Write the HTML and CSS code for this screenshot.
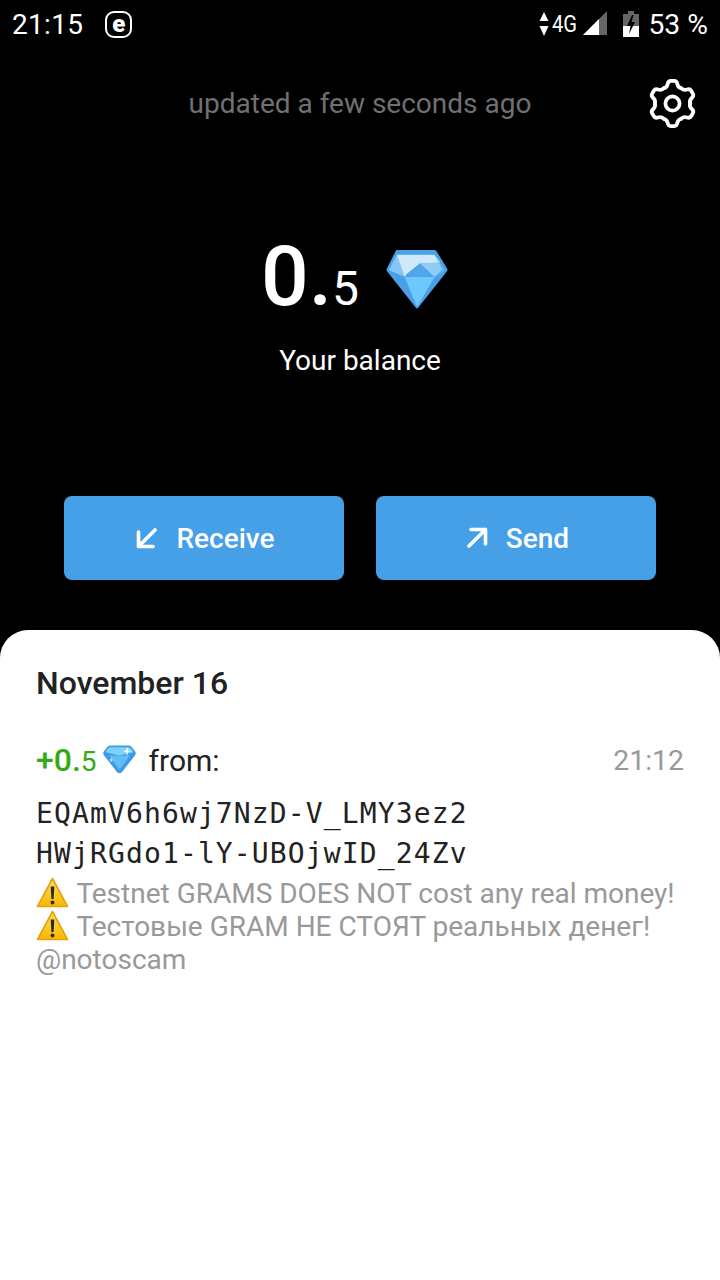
FILE: index.html
```html
<!DOCTYPE html>
<html lang="en">

<head>
  <meta charset="UTF-8">
  <meta name="viewport" content="width=device-width, initial-scale=1.0">
  <title>Wallet</title>
  <link rel="stylesheet" href="styles.css">
</head>

<body>
  <svg class="defs" width="0" height="0">
    <defs>
      <linearGradient id="warn-fill" x1="0" y1="0" x2="0" y2="1">
        <stop offset="0" stop-color="#ffe15a" />
        <stop offset="1" stop-color="#f8b700" />
      </linearGradient>
      <g id="gem">
        <path d="M11 1H50Q51 1 52 2L63 20Q64 22 63 23L33 61Q32 62 31 61L1 23Q0 22 1 20L10 2Q10 1 11 1Z" fill="#4a9fe8" />
        <path d="M11 6 3 22 19.5 29 32 60Z" fill="#86c6f5" />
        <path d="M50 6 61 22 50 29 32 60Z" fill="#62b4f2" />
        <path d="M11 6H50L56 14 35 15 21 26 19.5 29Z" fill="#cfe8fa" />
        <path d="M50 6 56 14 35 15 50 29 58 21Z" fill="#8fcdf7" />
        <path d="M19.5 29 35 15 50 29Z" fill="#4fa6ea" />
        <path d="M19.5 29H50L32 60Z" fill="#6cc8fd" />
      </g>
      <g id="gem-round">
        <path d="M14 3H50Q54 3 57 7L62 14Q65 18 62 22L37 54Q32 59 27 54L2 22Q-1 18 2 14L7 7Q10 3 14 3Z" fill="#3f9be6" />
        <path d="M14 6H50Q53 6 55 9L59 16 32 22 5 16 9 9Q11 6 14 6Z" fill="#7fd0fa" />
        <path d="M12 22H52L32 50Z" fill="#63bdf5" />
        <path d="M47 6 49 12 55 14 49 16 47 22 45 16 39 14 45 12Z" fill="#fff" />
        <path d="M16 26 17 30 21 31 17 32 16 36 15 32 11 31 15 30Z" fill="#eaf7ff" />
      </g>
      <g id="warn">
        <path d="M16 1.5 31 29.5H1Z" fill="url(#warn-fill)" stroke="#e5a20f" stroke-width="1.6" stroke-linejoin="round" />
        <path d="M14.2 9.5h3.6l-.7 12.5h-2.2Z" fill="#2b2b2b" />
        <circle cx="16" cy="25.5" r="1.9" fill="#2b2b2b" />
      </g>
      <path id="gear-lobe" d="M8 5.1C9.2 4.8 9.6 4.2 9.8 3.2 10 2.2 10.6 1.8 11.2 1.8H12.8C13.4 1.8 14 2.2 14.2 3.2 14.4 4.2 14.8 4.8 16 5.1" />
    </defs>
  </svg>

  <div class="status-bar">
    <div class="status-left">
      <span class="clock">21:15</span>
      <span class="e-badge">e</span>
    </div>
    <div class="status-right">
      <svg class="data-arrows" width="10" height="24" viewBox="0 0 10 24">
        <path d="M5 0 9.5 9H.5ZM5 24 .5 14H9.5Z" fill="#fff" />
      </svg>
      <span class="net">4G</span>
      <svg class="signal" width="24" height="26" viewBox="0 0 24 26">
        <path d="M0 24 24 0V24Z" fill="#666" />
        <path d="M0 24 16 8V24Z" fill="#fff" />
      </svg>
      <svg class="battery" width="16" height="26" viewBox="0 0 16 26">
        <path d="M0 3H5V0H11V3H16V26H0Z" fill="#666" />
        <path d="M0 15H16V26H0Z" fill="#fff" />
        <path d="M9 4 4 15H7.5L6 23 12 11H8.5L10.5 4Z" fill="#000" />
      </svg>
      <span class="percent">53 %</span>
    </div>
  </div>

  <header class="top-row">
    <span class="updated">updated a few seconds ago</span>
    <svg class="settings" width="53" height="53" viewBox="0 0 24 24" fill="none" stroke="#fff" stroke-width="1.7" stroke-linejoin="round" stroke-linecap="round">
      <circle cx="12" cy="12" r="3.2" />
      <use href="#gear-lobe" />
      <use href="#gear-lobe" transform="rotate(60 12 12)" />
      <use href="#gear-lobe" transform="rotate(120 12 12)" />
      <use href="#gear-lobe" transform="rotate(180 12 12)" />
      <use href="#gear-lobe" transform="rotate(240 12 12)" />
      <use href="#gear-lobe" transform="rotate(300 12 12)" />
    </svg>
  </header>

  <section class="balance">
    <div class="amount">
      <span class="amount-int">0.</span><span class="amount-frac">5</span>
      <svg class="gem-big" width="64" height="60" viewBox="0 0 64 62"><use href="#gem" /></svg>
    </div>
    <div class="balance-label">Your balance</div>
  </section>

  <div class="actions">
    <button class="btn">
      <svg width="22" height="22" viewBox="0 0 22 22" fill="none" stroke="#fff" stroke-width="3.6" stroke-linecap="round" stroke-linejoin="round">
        <path d="M2.5 5V19.5H17M2.5 19.5 19 3" />
      </svg>
      Receive
    </button>
    <button class="btn">
      <svg width="22" height="22" viewBox="0 0 22 22" fill="none" stroke="#fff" stroke-width="3.6" stroke-linecap="round" stroke-linejoin="round">
        <path d="M5 2.5H19.5V17M19.5 2.5 3 19" />
      </svg>
      Send
    </button>
  </div>

  <main class="sheet">
    <h2 class="date">November 16</h2>
    <div class="tx-head">
      <div class="tx-title">
        <span class="tx-amount"><b>+0.</b><small>5</small></span>
        <svg class="gem-small" width="33" height="30" viewBox="0 0 64 58"><use href="#gem-round" /></svg>
        <span class="tx-from">from:</span>
      </div>
      <span class="tx-time">21:12</span>
    </div>
    <div class="address">EQAmV6h6wj7NzD-V_LMY3ez2<br>HWjRGdo1-lY-UBOjwID_24Zv</div>
    <div class="comment">
      <div><svg class="warn" width="33" height="31" viewBox="0 0 32 31"><use href="#warn" /></svg> Testnet GRAMS DOES NOT cost any real money!</div>
      <div><svg class="warn" width="33" height="31" viewBox="0 0 32 31"><use href="#warn" /></svg> Тестовые GRAM НЕ СТОЯТ реальных денег!</div>
      <div>@notoscam</div>
    </div>
  </main>
</body>

</html>
```

FILE: styles.css
```css
* {
  box-sizing: border-box;
}

body {
  margin: 0;
  width: 720px;
  height: 1280px;
  display: flex;
  flex-direction: column;
  background: #000;
  color: #fff;
  font-family: Roboto, "Noto Sans", sans-serif;
  overflow: hidden;
}

.defs {
  position: absolute;
}

.status-bar {
  height: 48px;
  padding: 0 12px;
  display: flex;
  justify-content: space-between;
  align-items: center;
  flex-shrink: 0;
}

.status-left,
.status-right {
  display: flex;
  align-items: center;
}

.clock {
  font-size: 28px;
  letter-spacing: 0.3px;
}

.e-badge {
  margin-left: 22px;
  width: 27px;
  height: 27px;
  border: 2.5px solid #fff;
  border-radius: 9px;
  display: flex;
  align-items: center;
  justify-content: center;
  font-size: 24px;
  font-weight: 900;
  line-height: 1;
}

.data-arrows {
  margin-right: 3px;
}

.net {
  width: 25px;
  font-size: 24px;
  transform: scaleX(0.84);
  transform-origin: left;
}

.signal {
  margin-left: 6px;
}

.battery {
  margin-left: 16px;
}

.percent {
  margin-left: 9px;
  font-size: 28.3px;
}

.top-row {
  position: relative;
  height: 112px;
  padding-top: 34px;
  text-align: center;
  flex-shrink: 0;
}

.updated {
  font-size: 28px;
  line-height: 44px;
  color: #707070;
}

.settings {
  position: absolute;
  right: 21px;
  top: 29px;
}

.balance {
  height: 336px;
  padding-top: 69px;
  flex-shrink: 0;
}

.amount {
  display: flex;
  justify-content: center;
  align-items: baseline;
  height: 96px;
  padding-right: 10px;
  font-weight: 500;
}

.amount-int {
  font-size: 84px;
  line-height: 96px;
}

.amount-frac {
  font-size: 48px;
  font-weight: 400;
}

.gem-big {
  margin: 4px 0 0 26px;
  align-self: center;
}

.balance-label {
  margin-top: 16px;
  text-align: center;
  font-size: 28px;
  line-height: 40px;
}

.actions {
  display: flex;
  gap: 32px;
  padding: 0 64px;
  flex-shrink: 0;
}

.btn {
  flex: 1;
  height: 84px;
  padding: 0 0 0 3px;
  border: 0;
  border-radius: 8px;
  background: #46a0e8;
  color: #fff;
  font-family: inherit;
  font-size: 28px;
  font-weight: 500;
  display: flex;
  align-items: center;
  justify-content: center;
  gap: 18px;
}

.sheet {
  flex: 1;
  margin-top: 50px;
  padding: 33px 36px;
  background: #fff;
  border-radius: 28px 28px 0 0;
  color: #222;
}

.date {
  margin: 0;
  font-size: 32px;
  line-height: 40px;
  font-weight: 500;
}

.tx-head {
  margin-top: 35px;
  display: flex;
  justify-content: space-between;
  align-items: center;
  height: 44px;
}

.tx-title {
  display: flex;
  align-items: center;
}

.tx-amount {
  color: #37a818;
  font-size: 32px;
}

.tx-amount b {
  font-weight: 500;
}

.tx-amount small {
  font-size: 28px;
}

.gem-small {
  margin: 0 0 2px 6px;
}

.tx-from {
  margin-left: 13px;
  font-size: 30px;
}

.tx-time {
  color: #999;
  font-size: 28.4px;
}

.address {
  margin-top: 12px;
  font-family: "DejaVu Sans Mono", "Liberation Mono", monospace;
  font-size: 28px;
  letter-spacing: 1.13px;
  line-height: 40px;
}

.comment {
  margin-top: 3px;
  color: #999;
  font-size: 28px;
  line-height: 33px;
}

.warn {
  margin-right: 1px;
  vertical-align: -5px;
}
```
